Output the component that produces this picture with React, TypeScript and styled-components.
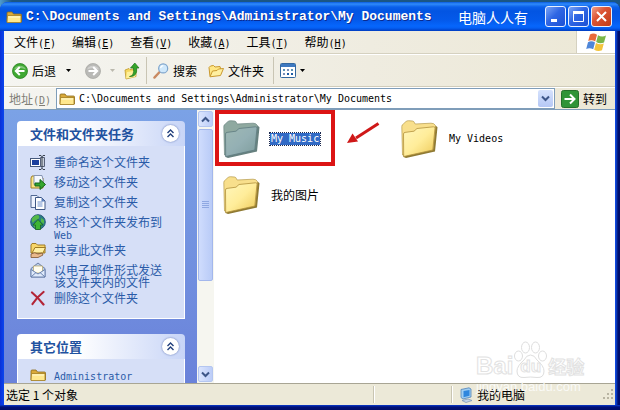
import React from "react";
import styled, { createGlobalStyle, css } from "styled-components";

const cjk = `"Noto Sans CJK SC", sans-serif`;
const mono = `"DejaVu Sans Mono", "Noto Sans CJK SC", monospace`;

const Global = createGlobalStyle`
  *, *::before, *::after { box-sizing: border-box; }
  body { margin: 0; background: #1b5684; font: 12px/16px ${cjk}; color: #000; }
  button, input { font: inherit; color: inherit; border: 0; padding: 0; margin: 0; background: none; }
  svg { display: block; flex: none; }
  a { color: inherit; text-decoration: none; }
`;

const Desktop = styled.div`
  height: 100vh;
  display: flex;
  flex-direction: column;
  padding-top: 2px;
  background: linear-gradient(90deg, #4f9bd0 0, #1b5684 12px);
`;

const Window = styled.div`
  position: relative;
  flex: 1;
  min-height: 0;
  display: flex;
  flex-direction: column;
  padding: 0 5px 5px 4px;
  border-radius: 8px 8px 0 0;
  background: linear-gradient(90deg, #0a30d8 0, #0a46ee 4px, #0a46ee calc(100% - 5px), #1048d0 calc(100% - 4px), #001070 calc(100% - 2px), #000e68 100%);
  overflow: hidden;
  &::after {
    content: "";
    position: absolute;
    inset: auto 0 0 0;
    height: 5px;
    background: linear-gradient(#0a3cd0, #001078 2px, #000e68);
  }
`;

const TitleBar = styled.header`
  display: flex;
  align-items: center;
  gap: 4px;
  height: 29px;
  margin: 0 -5px 0 -4px;
  padding: 0 8px 0 6px;
  flex: none;
  background: linear-gradient(#0a5ce0 0, #2f8bfa 2px, #0b60ea 5px, #0355e2 9px, #0459ea 18px, #0666fc 24px, #0560f4 26px, #003bc0 29px);
`;

const Title = styled.h1`
  margin: 0;
  flex: 1;
  font: bold 13px/20px "Liberation Mono", monospace;
  color: #fff;
  text-shadow: 1px 1px #0a2a90;
  white-space: nowrap;
`;

const Signature = styled.span`
  margin-right: 15px;
  font: 400 14px/20px ${cjk};
  color: #fff;
  white-space: nowrap;
`;

const Caption = styled.button<{ $close?: boolean }>`
  width: 21px;
  height: 21px;
  margin-left: -2px;
  display: grid;
  place-items: center;
  border: 1px solid #e8f0ff;
  border-radius: 3px;
  background: ${(p) =>
    p.$close
      ? "linear-gradient(135deg, #f0a088, #dc5434 40%, #c03c18)"
      : "linear-gradient(135deg, #7ba4f5, #2f66e4 45%, #1c50d4)"};
`;

const bar = css`
  display: flex;
  align-items: center;
  flex: none;
  background: linear-gradient(90deg, #f5f5f1, #efece0 60%, #ece8d6);
`;

const MenuBar = styled.nav`
  ${bar}
  height: 23px;
  padding-left: 10px;
  gap: 16px;
  border-bottom: 1px solid #d5d1c0;
`;

const MenuItem = styled.button`
  white-space: nowrap;
`;

const Latin = styled.span`
  font-family: ${mono};
  font-size: 10px;
  line-height: 0;
`;

const Flag = styled.div`
  align-self: stretch;
  width: 39px;
  margin-left: auto;
  display: grid;
  place-items: center;
  background: #fff;
  border-left: 1px solid #d5d1c0;
`;

const ToolBar = styled.div`
  ${bar}
  height: 33px;
  padding-left: 8px;
  border-top: 1px solid #fff;
  border-bottom: 1px solid #d0ccba;
`;

const Tool = styled.button<{ $space?: number }>`
  display: flex;
  align-items: center;
  gap: 4px;
  margin-right: ${(p) => p.$space ?? 0}px;
  white-space: nowrap;
`;

const Divider = styled.span`
  width: 1px;
  height: 27px;
  margin-right: 6px;
  background: #c9c5b4;
`;

const AddressBar = styled.div`
  ${bar}
  height: 22px;
  padding-right: 8px;
  border-top: 1px solid #fff;
  gap: 6px;
`;

const AddressLabel = styled.label`
  width: 46px;
  padding-left: 5px;
  color: #807e76;
  white-space: nowrap;
`;

const AddressBox = styled.div`
  flex: 1;
  align-self: stretch;
  display: flex;
  align-items: center;
  gap: 4px;
  padding: 0 1px 0 2px;
  background: #fff;
  border: 1px solid #7f9db9;
`;

const AddressInput = styled.input`
  flex: 1;
  min-width: 0;
  font: 10px/16px ${mono};
  outline: none;
`;

const DropButton = styled.button`
  width: 15px;
  height: 17px;
  display: grid;
  place-items: center;
  border-radius: 2px;
  background: linear-gradient(#d6e2fd, #b5c8f5);
`;

const Content = styled.div`
  flex: 1;
  min-height: 0;
  display: flex;
  border-top: 1px solid #7f9db9;
`;

const Sidebar = styled.aside`
  width: 193px;
  flex: none;
  display: flex;
  flex-direction: column;
  gap: 15px;
  overflow: hidden;
  padding: 11px 12px 0 13px;
  background: linear-gradient(#7ba2e6, #6a82da);
`;

const Panel = styled.section`
  flex: none;
`;

const PanelHead = styled.div`
  display: flex;
  align-items: center;
  justify-content: space-between;
  height: 25px;
  padding: 0 6px 0 13px;
  border-radius: 4px 4px 0 0;
  background: linear-gradient(90deg, #fff 35%, #c8d5f7);
`;

const PanelTitle = styled.h2`
  margin: 0;
  font: bold 13px/20px ${cjk};
  color: #1f52a0;
`;

const Collapse = styled.button`
  width: 17px;
  height: 17px;
  display: grid;
  place-items: center;
  border-radius: 50%;
  background: #fff;
  box-shadow: 0 0 2px #5a70b0;
`;

const Tasks = styled.ul`
  list-style: none;
  margin: 0;
  padding: 8px 16px 12px 12px;
  display: flex;
  flex-direction: column;
  gap: 4px;
  background: #d6dff7;
  border: 1px solid #fff;
  border-top: 0;
`;

const Task = styled.a`
  display: flex;
  align-items: flex-start;
  gap: 8px;
  min-height: 16px;
  line-height: 12px;
  color: #2a5ba8;
`;

const TaskIcon = styled.span`
  height: 16px;
`;

const TaskText = styled.span`
  margin: 2px 0 -2px;
`;

const ScrollBar = styled.div`
  width: 17px;
  flex: none;
  display: flex;
  flex-direction: column;
  padding: 1px;
  gap: 2px;
  background: #f6f6f0;
`;

const ScrollButton = styled.button`
  height: 16px;
  display: grid;
  place-items: center;
  border-radius: 2px;
  border: 1px solid #b4c6f0;
  background: linear-gradient(90deg, #dbe5fe, #bccdf8);
`;

const Thumb = styled.div`
  flex: 0 0 56%;
  display: grid;
  place-items: center;
  border: 1px solid #a3b7ec;
  border-radius: 2px;
  background: linear-gradient(90deg, #cfdcfd, #b9cbf7);
`;

const Spacer = styled.div`
  flex: 1;
`;

const Files = styled.main`
  position: relative;
  flex: 1;
  display: grid;
  grid-template-columns: repeat(auto-fill, 178px);
  grid-auto-rows: 56px;
  align-content: start;
  padding: 1px 0 0 8px;
  background: #fff;
`;

const FileItem = styled.a`
  display: flex;
  align-items: center;
  gap: 10px;
`;

const FileName = styled.span<{ $selected?: boolean; $latin?: boolean }>`
  line-height: 12px;
  padding: 0 1px;
  ${(p) => p.$latin && css`font-family: ${mono}; font-size: 10px;`}
  ${(p) => p.$selected && css`color: #fff; background: #316ac5; outline: 1px dotted #1c2a50;`}
`;

const Highlight = styled.span`
  position: absolute;
  left: 1px;
  top: 0;
  width: 120px;
  height: 56px;
  border: 4px solid #dc1414;
`;

const Pointer = styled.svg`
  position: absolute;
  left: 130px;
  top: 9px;
`;

const StatusBar = styled.footer`
  ${bar}
  position: relative;
  height: 22px;
  border-top: 1px solid #a8a594;
  background: #ece9d8;
`;

const StatusText = styled.span`
  flex: 1;
  padding-left: 2px;
`;

const StatusCell = styled.span<{ $wide?: boolean }>`
  display: flex;
  align-items: center;
  gap: 4px;
  height: 17px;
  width: ${(p) => (p.$wide ? 164 : 78)}px;
  padding-left: 8px;
  border-left: 1px solid #c9c5b2;
  box-shadow: inset 1px 0 #fff;
`;

const Brand = styled.div`
  position: absolute;
  right: 30px;
  bottom: 16px;
  width: 114px;
  pointer-events: none;
`;

const BrandRow = styled.div`
  display: flex;
  align-items: center;
  gap: 1px;
  height: 38px;
  font: bold 24px/28px "Liberation Sans", ${cjk};
  color: #fff;
  -webkit-text-stroke: 1px #e2e2e2;
  padding-top: 10px;
`;

const Paw = styled.span`
  position: relative;
  width: 33px;
  height: 38px;
  margin-top: -12px;
`;

const PawText = styled.span`
  position: absolute;
  left: 6px;
  top: 16px;
  font: bold 17px/20px "Liberation Sans", sans-serif;
  color: #fff;
`;

const BrandCjk = styled.span`
  font: bold 18px/28px ${cjk};
`;

const BrandUrl = styled.div`
  font: 13px/14px "Liberation Sans", sans-serif;
  color: #fafaf6;
`;

const Folder = ({ w = 16 }: { w?: number }) => (
  <svg width={w} height={w} viewBox="0 0 16 16">
    <path d="M1 13V4q0-1 1-1h4l1.500 2h7q1 0 1 1v7z" fill="#d9a93a" stroke="#8c6a1c" strokeWidth=".8" />
    <path d="M1 13.500 1.500 6.500h13.500v7z" fill="#ffe88e" stroke="#a37d22" strokeWidth=".8" />
    <path d="M2.300 8h11.800" stroke="#fff8d4" />
  </svg>
);

const BigFolder = ({ selected }: { selected?: boolean }) => {
  const id = selected ? "fs" : "fn";
  return (
    <svg width="38" height="40" viewBox="0 0 38 40">
      <defs>
        <linearGradient id={id} x1="0" y1="0" x2="1" y2="1">
          <stop offset="0" stopColor={selected ? "#9fb9b4" : "#fff6bc"} />
          <stop offset=".5" stopColor={selected ? "#94b0b4" : "#ffed9a"} />
          <stop offset="1" stopColor={selected ? "#7d9c9c" : "#edc958"} />
        </linearGradient>
      </defs>
      <path d="M3.500 38 2 9.500q0-3 2.500-3.500L12 4l4 3.500 17.500-.8q3.500-.3 4 1.500L35 32.500 6 39z" fill={selected ? "#67817f" : "#8f7a33"} />
      <path d="M2.500 36 1.800 7.500q0-1.700 1.500-2.500L6 2.500q1-.8 2.500-.8L12.500 2q1.500.2 2 1.800L15.200 5 31 4.200q3-.2 4.500 2.300l-2.500 24z" fill={selected ? "#8fa9a0" : "#f8df8c"} stroke={selected ? "#6d8682" : "#b59a4a"} strokeWidth=".7" />
      <path d="M3.700 37.500 3.500 15q0-1.500 1.500-1.600l9-1.200 3-2.700 16.500-1.700q1.600 0 1.500 1.400L32.800 31z" fill={`url(#${id})`} stroke={selected ? "#5e7b80" : "#b3923c"} strokeWidth=".8" />
    </svg>
  );
};

const Chevron = ({ up }: { up?: boolean }) => (
  <svg width="9" height="7" viewBox="0 0 9 7">
    <path d={up ? "M1 5.500 4.500 2 8 5.500" : "M1 1.500 4.500 5 8 1.500"} fill="none" stroke="#3d5688" strokeWidth="2" />
  </svg>
);

const Caret = ({ muted }: { muted?: boolean }) => (
  <svg width="5" height="3" viewBox="0 0 5 3">
    <path d="M0 0h5L2.500 3z" fill={muted ? "#bbb9ae" : "#000"} />
  </svg>
);

const RoundArrow = ({ forward }: { forward?: boolean }) => (
  <svg width="16" height="16" viewBox="0 0 16 16">
    <circle cx="8" cy="8" r="7.500" fill={forward ? "#b9b9b6" : "#3fa832"} stroke={forward ? "#a9a9a5" : "#2a8522"} strokeWidth=".8" />
    <path d="M2 6.500a6.500 6 0 0 1 12 0q-6-3-12 0z" fill="#fff" opacity=".35" />
    <path d={forward ? "M3.500 8h8.500M8.200 4 12.200 8l-4 4" : "M12.500 8H4M7.800 4l-4 4 4 4"} fill="none" stroke="#fff" strokeWidth="2" />
  </svg>
);

const UpFolder = () => (
  <svg width="16" height="18" viewBox="0 0 16 18">
    <path d="M1 8l4-1.500 1 1 6-1v8L2 17z" fill="#f5d860" stroke="#bf9a2c" strokeWidth=".8" />
    <path d="M2 16.500 3 10l10-1.500-2 6.500z" fill="#fff09a" />
    <path d="M5.500 14.500q5-.5 4-8.500H6.500L10.800 1 15 6h-2.300q.8 9-7.200 8.500z" fill="#35a52a" stroke="#1d7418" strokeWidth=".7" />
  </svg>
);

const Search = () => (
  <svg width="16" height="16" viewBox="0 0 17 17">
    <path d="M1.500 15.500 7 9.500" stroke="#c98a62" strokeWidth="2.500" strokeLinecap="round" />
    <circle cx="10.800" cy="5.800" r="4.800" fill="#cfe8fb" stroke="#7fa5cc" strokeWidth="1.300" />
    <path d="M8 5.500q.5-2.500 3-2.700" stroke="#fff" strokeWidth="1.300" fill="none" />
  </svg>
);

const OpenFolder = () => (
  <svg width="16" height="16" viewBox="0 0 16 16">
    <path d="M2 13.500 1 4.500 2.500 3l3-.5L7 4l5-.5.8 3" fill="#ffe785" stroke="#c9982e" />
    <path d="M2 13.800 4.500 8l4.500-.5L10.500 6l5-.5-3 7z" fill="#fff0a0" stroke="#c9982e" />
  </svg>
);

const Views = () => (
  <svg width="16" height="15" viewBox="0 0 16 15">
    <rect x=".5" y=".5" width="15" height="14" rx="1" fill="#fff" stroke="#34689f" />
    <path d="M1 1h14v3H1z" fill="#3e79c0" />
    <path d="M3 6h2v2H3zM11 6h2v2h-2z" fill="#5c93b5" />
    <path d="M7 6h2v2H7zM3 10h2v2H3z" fill="#7a8fb8" />
    <path d="M7 10h2v2H7zM11 10h2v2h-2z" fill="#1f5da5" />
  </svg>
);

const Go = () => (
  <svg width="18" height="18" viewBox="0 0 18 18">
    <rect x=".5" y=".5" width="17" height="17" rx="2" fill="#2f9437" stroke="#237029" />
    <path d="M3.500 9h10M9 4.500 13.500 9 9 13.500" stroke="#fff" strokeWidth="2" fill="none" />
  </svg>
);

const WindowsFlag = () => (
  <svg width="21" height="19" viewBox="0 0 21 19">
    <path d="M4 1.500q3.500-2 7 .2L9.200 8.500q-3.500-2.200-7-.4z" fill="#e86a3a" />
    <path d="M12 2.200q4 2.200 8 .3l-2 7q-4 1.800-7.800-.4z" fill="#7ab648" />
    <path d="M2 9.200q3.500-1.800 7 .3l-1.800 6.800q-3.500-2-7-.3z" fill="#4f86d8" />
    <path d="M10 10q4 2.200 7.800.5L16 17.300q-4 1.700-7.800-.5z" fill="#f3c43c" />
  </svg>
);

const DoubleUp = () => (
  <svg width="9" height="9" viewBox="0 0 9 9">
    <path d="M1.500 4 4.500 1l3 3M1.500 8l3-3 3 3" fill="none" stroke="#223f7c" strokeWidth="1.400" />
  </svg>
);

const icons: Record<string, React.ReactNode> = {
  rename: (
    <>
      <rect x=".5" y="4.500" width="10" height="8" fill="#fff" stroke="#46597c" />
      <path d="M2 6h7v5H2z" fill="#1b3f9c" />
      <path d="M10.500 3.500h4v9h-4z" fill="#c9cfda" stroke="#566078" />
      <path d="M9 1.500h2l1 1 1-1h2M12 2v13M9 15.500h2l1-1 1 1h2" stroke="#39424f" fill="none" />
    </>
  ),
  move: (
    <>
      <path d="M1 14V4l1-2h4l1 2h6v10z" fill="#fbe584" stroke="#a08026" />
      <path d="M4 1.500h8l1 4v5H4z" fill="#f5f8ff" stroke="#8695b2" />
      <path d="M5 9h5V5.500l5.500 5L10 15.500V12H5z" fill="#36a62e" stroke="#14651a" />
    </>
  ),
  copy: (
    <>
      <path d="M1 1.500h6l3 3v9H1z" fill="#eef3ff" stroke="#536a94" />
      <path d="M5.500 3.500h6l3.500 3.500v8.500H5.500z" fill="#fff" stroke="#3f5785" />
      <path d="M7.500 8h5M7.500 10h5M7.500 12h5" stroke="#6e90cc" />
      <path d="M11.500 3.500v4h3.500z" fill="#587cba" />
    </>
  ),
  web: (
    <>
      <circle cx="8" cy="8" r="7.300" fill="#2c7d84" stroke="#285a78" />
      <path d="M2 4q4-4 7-2.500 1 3-2 4T3 9Q1 7 2 4zM11 4l3 2v4l-3-2zM3 11l3 1-1 2z" fill="#53b947" />
      <path d="M5.500 15.500V11H3l5-5.500 5 5.500h-2.500v4.500z" fill="#3db534" stroke="#1a661f" strokeWidth=".8" />
    </>
  ),
  share: (
    <>
      <path d="M1 11V3l1-1.500h4L7.500 3H15v8z" fill="#f8d669" stroke="#9f7b24" />
      <path d="M2 11 5 5.500h10.500L13 11z" fill="#fff0a4" stroke="#9f7b24" />
      <path d="M1 12q4-2.500 7 0l4-1 1 2-5 2.500H1z" fill="#e9b98c" stroke="#7c5430" strokeWidth=".8" />
    </>
  ),
  mail: (
    <>
      <path d="M1 6.500 8 1l7 5.500V15H1z" fill="#b8cdec" stroke="#6c7fa5" />
      <path d="M3.500 4h9v7h-9z" fill="#fffdf0" stroke="#b5a060" strokeWidth=".7" />
      <path d="M1 7.500 8 12l7-4.500V15H1z" fill="#dfeafb" stroke="#6c84b0" />
      <path d="M1 15l5-4.500M15 15l-5-4.500" stroke="#6c84b0" />
    </>
  ),
  remove: <path d="M2 2.500q6 5 11.500 12M13.500 2Q7 7 2.500 14" stroke="#b32538" strokeWidth="2.200" fill="none" strokeLinecap="round" />,
};

const tasks: [string, string][] = [
  ["rename", "重命名这个文件夹"],
  ["move", "移动这个文件夹"],
  ["copy", "复制这个文件夹"],
  ["web", "将这个文件夹发布到"],
  ["share", "共享此文件夹"],
  ["mail", "以电子邮件形式发送该文件夹内的文件"],
  ["remove", "删除这个文件夹"],
];

const menus: [string, string][] = [
  ["文件", "F"], ["编辑", "E"], ["查看", "V"], ["收藏", "A"], ["工具", "T"], ["帮助", "H"],
];

const path = "C:\\Documents and Settings\\Administrator\\My Documents";

export default function App() {
  return (
    <>
      <Global />
      <Desktop>
        <Window>
          <TitleBar>
            <Folder />
            <Title>{path}</Title>
            <Signature>电脑人人有</Signature>
            <Caption aria-label="最小化">
              <svg width="13" height="13"><path d="M2 9h6v3H2z" fill="#fff" /></svg>
            </Caption>
            <Caption aria-label="最大化">
              <svg width="13" height="13"><path d="M1.500 2.500h10v9h-10z" fill="none" stroke="#fff" /><path d="M1 1h11v3H1z" fill="#fff" /></svg>
            </Caption>
            <Caption $close aria-label="关闭">
              <svg width="13" height="13"><path d="M2 2l9 9M11 2l-9 9" stroke="#fff" strokeWidth="2" /></svg>
            </Caption>
          </TitleBar>

          <MenuBar>
            {menus.map(([label, key]) => (
              <MenuItem key={key}>
                {label}<Latin>(<u>{key}</u>)</Latin>
              </MenuItem>
            ))}
            <Flag><WindowsFlag /></Flag>
          </MenuBar>

          <ToolBar>
            <Tool $space={10}><RoundArrow />后退</Tool>
            <Tool $space={14} aria-label="后退记录"><Caret /></Tool>
            <Tool $space={9} aria-label="前进"><RoundArrow forward /></Tool>
            <Tool $space={9} aria-label="前进记录"><Caret muted /></Tool>
            <Tool $space={6} aria-label="向上"><UpFolder /></Tool>
            <Divider />
            <Tool $space={11}><Search />搜索</Tool>
            <Tool $space={9}><OpenFolder />文件夹</Tool>
            <Divider />
            <Tool aria-label="查看方式"><Views /><Caret /></Tool>
          </ToolBar>

          <AddressBar>
            <AddressLabel htmlFor="address">地址<Latin>(<u>D</u>)</Latin></AddressLabel>
            <AddressBox>
              <Folder />
              <AddressInput id="address" defaultValue={path} />
              <DropButton aria-label="展开地址列表"><Chevron /></DropButton>
            </AddressBox>
            <Tool><Go />转到</Tool>
          </AddressBar>

          <Content>
            <Sidebar>
              <Panel>
                <PanelHead>
                  <PanelTitle>文件和文件夹任务</PanelTitle>
                  <Collapse aria-label="折叠"><DoubleUp /></Collapse>
                </PanelHead>
                <Tasks>
                  {tasks.map(([icon, text]) => (
                    <li key={icon}>
                      <Task href="#">
                        <TaskIcon><svg width="16" height="16" viewBox="0 0 16 16">{icons[icon]}</svg></TaskIcon>
                        <TaskText>{text}{icon === "web" && <Latin> Web</Latin>}</TaskText>
                      </Task>
                    </li>
                  ))}
                </Tasks>
              </Panel>
              <Panel>
                <PanelHead>
                  <PanelTitle>其它位置</PanelTitle>
                  <Collapse aria-label="折叠"><DoubleUp /></Collapse>
                </PanelHead>
                <Tasks>
                  <li>
                    <Task href="#">
                      <TaskIcon><Folder /></TaskIcon>
                      <TaskText><Latin>Administrator</Latin></TaskText>
                    </Task>
                  </li>
                </Tasks>
              </Panel>
            </Sidebar>

            <ScrollBar>
              <ScrollButton aria-label="向上滚动"><Chevron up /></ScrollButton>
              <Thumb>
                <svg width="7" height="8"><path d="M0 .5h7M0 2.500h7M0 4.500h7M0 6.500h7" stroke="#8fa8e2" /></svg>
              </Thumb>
              <Spacer />
              <ScrollButton aria-label="向下滚动"><Chevron /></ScrollButton>
            </ScrollBar>

            <Files>
              <FileItem href="#"><BigFolder selected /><FileName $latin $selected>My Music</FileName></FileItem>
              <FileItem href="#"><BigFolder /><FileName $latin>My Videos</FileName></FileItem>
              <FileItem href="#"><BigFolder /><FileName>我的图片</FileName></FileItem>
              <Highlight />
              <Pointer width="38" height="28" viewBox="0 0 38 28">
                <path d="M34.500 4.500 12 19" stroke="#cf1818" strokeWidth="3" />
                <path d="M3 24 8.500 14.500 14 22.500z" fill="#cf1818" />
              </Pointer>
            </Files>
          </Content>

          <StatusBar>
            <StatusText>选定 1 个对象</StatusText>
            <StatusCell />
            <StatusCell $wide>
              <svg width="13" height="16" viewBox="0 0 13 16">
                <path d="M1 2.500 9 .8l2 1.200v8L3 12 1 10.500z" fill="#9fcdf2" stroke="#5283b8" strokeWidth=".8" />
                <path d="M3.500 4 9.500 3v5.800l-6 1.400z" fill="#2f86dd" />
                <path d="M2 13.500 8 12l4 1.500-6 2z" fill="#c5d6ea" stroke="#7591b2" strokeWidth=".7" />
              </svg>
              我的电脑
              <Spacer />
              <svg width="12" height="12"><path d="M8 0h2v2H8zM4 4h2v2H4zM8 4h2v2H8zM0 8h2v2H0zM4 8h2v2H4zM8 8h2v2H8z" fill="#b8b4a2" /></svg>
            </StatusCell>
          </StatusBar>

          <Brand aria-hidden="true">
            <BrandRow>
              Bai
              <Paw>
                <svg width="33" height="38" viewBox="0 0 33 38" fill="#fff" stroke="#dedede">
                  <ellipse cx="4.500" cy="15" rx="4" ry="5" />
                  <ellipse cx="11.500" cy="6.500" rx="4" ry="5.500" />
                  <ellipse cx="21.500" cy="6.500" rx="4" ry="5.500" />
                  <ellipse cx="28.500" cy="15" rx="4" ry="5" />
                  <path d="M16.500 14q4 0 6.500 5 7 6 7 11 0 7-7 6.500-6.500-1-13 0Q3 37 3 30q0-5 7-11 2.500-5 6.500-5z" />
                </svg>
                <PawText>du</PawText>
              </Paw>
              <BrandCjk>经验</BrandCjk>
            </BrandRow>
            <BrandUrl>jingyan.baidu.com</BrandUrl>
          </Brand>
        </Window>
      </Desktop>
    </>
  );
}
